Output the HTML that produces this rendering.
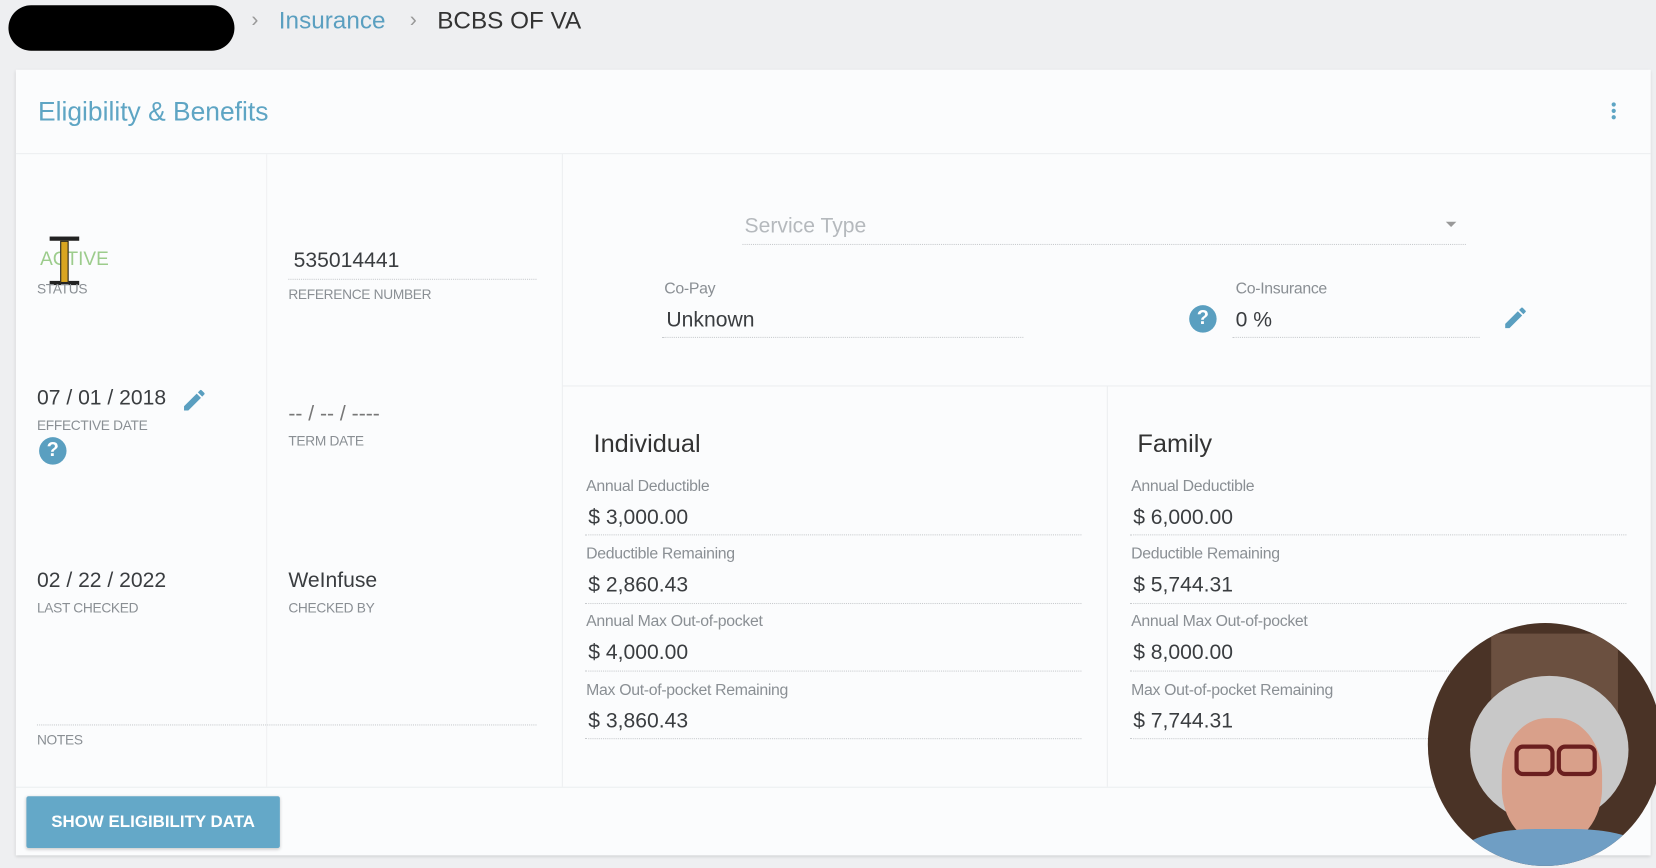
<!DOCTYPE html>
<html><head><meta charset="utf-8"><style>
html,body{margin:0;padding:0;width:1656px;height:868px;overflow:hidden;background:#eeeff1;font-family:"Liberation Sans",sans-serif}
#w{position:absolute;left:0;top:0;width:1568px;height:822px;transform:scale(1.0561,1.056);transform-origin:0 0}
.a{position:absolute;white-space:nowrap}
.lbl{font-size:15px;color:#8a8f94;letter-spacing:-0.3px}
.cap{font-size:13px;color:#8a8f94;text-transform:uppercase;letter-spacing:-0.3px}
.val{font-size:20px;color:#3a3d40}
.dot{position:absolute;border-bottom:1px dotted #c7cacd}
</style></head><body><div id="w">
<div class="a" style="left:8px;top:5px;width:214px;height:43px;background:#000;border-radius:22px"></div>
<div class="a" style="left:238px;top:8px;font-size:20px;color:#999">›</div>
<div class="a" style="left:264px;top:6px;font-size:23px;color:#5a9fc0">Insurance</div>
<div class="a" style="left:388px;top:8px;font-size:20px;color:#999">›</div>
<div class="a" style="left:414px;top:6px;font-size:23px;color:#333">BCBS OF VA</div>

<div class="a" style="left:15px;top:66px;width:1548px;height:744px;background:#fbfcfd;box-shadow:0 1px 3px rgba(0,0,0,.15)"></div>
<div class="a" style="left:15px;top:145px;width:1548px;height:1px;background:#eceef0"></div>
<div class="a" style="left:36px;top:92px;font-size:25px;color:#5ea5c4">Eligibility &amp; Benefits</div>
<div class="a" style="left:1526px;top:97px;width:4px;height:4px;border-radius:2px;background:#5ea5c4;box-shadow:0 6px 0 #5ea5c4,0 12px 0 #5ea5c4"></div>
<div class="a" style="left:252px;top:146px;width:1px;height:599px;background:#f0f1f3"></div>
<div class="a" style="left:532px;top:146px;width:1px;height:599px;background:#eceef0"></div>
<div class="a" style="left:533px;top:365px;width:1030px;height:1px;background:#eceef0"></div>
<div class="a" style="left:1048px;top:366px;width:1px;height:379px;background:#eceef0"></div>
<div class="a" style="left:15px;top:745px;width:1548px;height:1px;background:#eceef0"></div>

<div class="a" style="left:38px;top:235px;font-size:18px;color:#9ccc8c">ACTIVE</div>
<div class="a" style="left:47px;top:224px;width:28px;height:46px;border-top:4px solid #222;border-bottom:4px solid #222;box-sizing:border-box"><div style="position:absolute;left:10px;top:0;width:6px;height:38px;background:#d9a520;border:1px solid #222"></div></div>
<div class="a cap" style="left:35px;top:266px">Status</div>
<div class="a val" style="left:278px;top:236px">535014441</div>
<div class="dot" style="left:273px;top:264px;width:235px"></div>
<div class="a cap" style="left:273px;top:271px">Reference Number</div>

<div class="a val" style="left:35px;top:366px">07 / 01 / 2018</div>
<svg class="a" style="left:171px;top:366px" width="26" height="26" viewBox="0 0 24 24"><path fill="#5a9fc0" d="M3 17.25V21h3.75L17.81 9.94l-3.75-3.75L3 17.25zM20.71 7.04a1 1 0 000-1.41l-2.34-2.34a1 1 0 00-1.41 0l-1.83 1.83 3.75 3.75 1.83-1.83z"/></svg>
<div class="a cap" style="left:35px;top:395px">Effective Date</div>
<div class="a" style="left:37px;top:414px;width:26px;height:26px;border-radius:13px;background:#5a9fc0;color:#fff;font-size:19px;font-weight:bold;text-align:center;line-height:26px">?</div>
<div class="a val" style="left:273px;top:381px;color:#777">-- / -- / ----</div>
<div class="a cap" style="left:273px;top:410px">Term Date</div>

<div class="a val" style="left:35px;top:539px">02 / 22 / 2022</div>
<div class="a cap" style="left:35px;top:568px">Last Checked</div>
<div class="a val" style="left:273px;top:539px">WeInfuse</div>
<div class="a cap" style="left:273px;top:568px">Checked By</div>
<div class="dot" style="left:35px;top:686px;width:473px"></div>
<div class="a cap" style="left:35px;top:693px">Notes</div>

<div class="a" style="left:705px;top:203px;font-size:20px;color:#b5b9bd">Service Type</div>
<div class="a" style="left:1369px;top:210px;border-left:5px solid transparent;border-right:5px solid transparent;border-top:5px solid #999"></div>
<div class="dot" style="left:703px;top:231px;width:685px"></div>
<div class="a lbl" style="left:629px;top:265px">Co-Pay</div>
<div class="a val" style="left:631px;top:292px">Unknown</div>
<div class="dot" style="left:627px;top:319px;width:342px"></div>
<div class="a lbl" style="left:1170px;top:265px">Co-Insurance</div>
<div class="a" style="left:1126px;top:289px;width:26px;height:26px;border-radius:13px;background:#5a9fc0;color:#fff;font-size:19px;font-weight:bold;text-align:center;line-height:26px">?</div>
<div class="a val" style="left:1170px;top:292px">0 %</div>
<div class="dot" style="left:1167px;top:319px;width:234px"></div>
<svg class="a" style="left:1422px;top:288px" width="26" height="26" viewBox="0 0 24 24"><path fill="#5a9fc0" d="M3 17.25V21h3.75L17.81 9.94l-3.75-3.75L3 17.25zM20.71 7.04a1 1 0 000-1.41l-2.34-2.34a1 1 0 00-1.41 0l-1.83 1.83 3.75 3.75 1.83-1.83z"/></svg>

<div class="a" style="left:562px;top:407px;font-size:24px;color:#333">Individual</div>
<div class="a" style="left:1077px;top:407px;font-size:24px;color:#333">Family</div>

<div class="a lbl" style="left:555px;top:452px">Annual Deductible</div>
<div class="a val" style="left:557px;top:479px">$ 3,000.00</div>
<div class="dot" style="left:554px;top:506px;width:470px"></div>
<div class="a lbl" style="left:555px;top:516px">Deductible Remaining</div>
<div class="a val" style="left:557px;top:543px">$ 2,860.43</div>
<div class="dot" style="left:554px;top:571px;width:470px"></div>
<div class="a lbl" style="left:555px;top:580px">Annual Max Out-of-pocket</div>
<div class="a val" style="left:557px;top:607px">$ 4,000.00</div>
<div class="dot" style="left:554px;top:635px;width:470px"></div>
<div class="a lbl" style="left:555px;top:645px">Max Out-of-pocket Remaining</div>
<div class="a val" style="left:557px;top:672px">$ 3,860.43</div>
<div class="dot" style="left:554px;top:699px;width:470px"></div>

<div class="a lbl" style="left:1071px;top:452px">Annual Deductible</div>
<div class="a val" style="left:1073px;top:479px">$ 6,000.00</div>
<div class="dot" style="left:1070px;top:506px;width:470px"></div>
<div class="a lbl" style="left:1071px;top:516px">Deductible Remaining</div>
<div class="a val" style="left:1073px;top:543px">$ 5,744.31</div>
<div class="dot" style="left:1070px;top:571px;width:470px"></div>
<div class="a lbl" style="left:1071px;top:580px">Annual Max Out-of-pocket</div>
<div class="a val" style="left:1073px;top:607px">$ 8,000.00</div>
<div class="dot" style="left:1070px;top:635px;width:470px"></div>
<div class="a lbl" style="left:1071px;top:645px">Max Out-of-pocket Remaining</div>
<div class="a val" style="left:1073px;top:672px">$ 7,744.31</div>
<div class="dot" style="left:1070px;top:699px;width:470px"></div>

<div class="a" style="left:25px;top:754px;width:240px;height:49px;background:#64a8c8;border-radius:2px;color:#fff;font-size:16px;font-weight:bold;text-align:center;line-height:49px;box-shadow:0 1px 3px rgba(0,0,0,.2)">SHOW ELIGIBILITY DATA</div>

<div class="a" style="left:1352px;top:590px;width:222px;height:230px;border-radius:50%;overflow:hidden;background:#4a3326">
 <div style="position:absolute;left:60px;top:10px;width:120px;height:80px;background:#6b5040"></div>
 <div style="position:absolute;left:40px;top:50px;width:150px;height:140px;border-radius:50%;background:#c8c8c8"></div>
 <div style="position:absolute;left:70px;top:90px;width:95px;height:120px;border-radius:45%;background:#d9a08a"></div>
 <div style="position:absolute;left:30px;top:195px;width:180px;height:60px;border-radius:40%;background:#6f9ec4"></div>
 <div style="position:absolute;left:82px;top:115px;width:30px;height:22px;border:4px solid #6b1f1f;border-radius:8px"></div>
 <div style="position:absolute;left:122px;top:115px;width:30px;height:22px;border:4px solid #6b1f1f;border-radius:8px"></div>
</div>
</div></body></html>
